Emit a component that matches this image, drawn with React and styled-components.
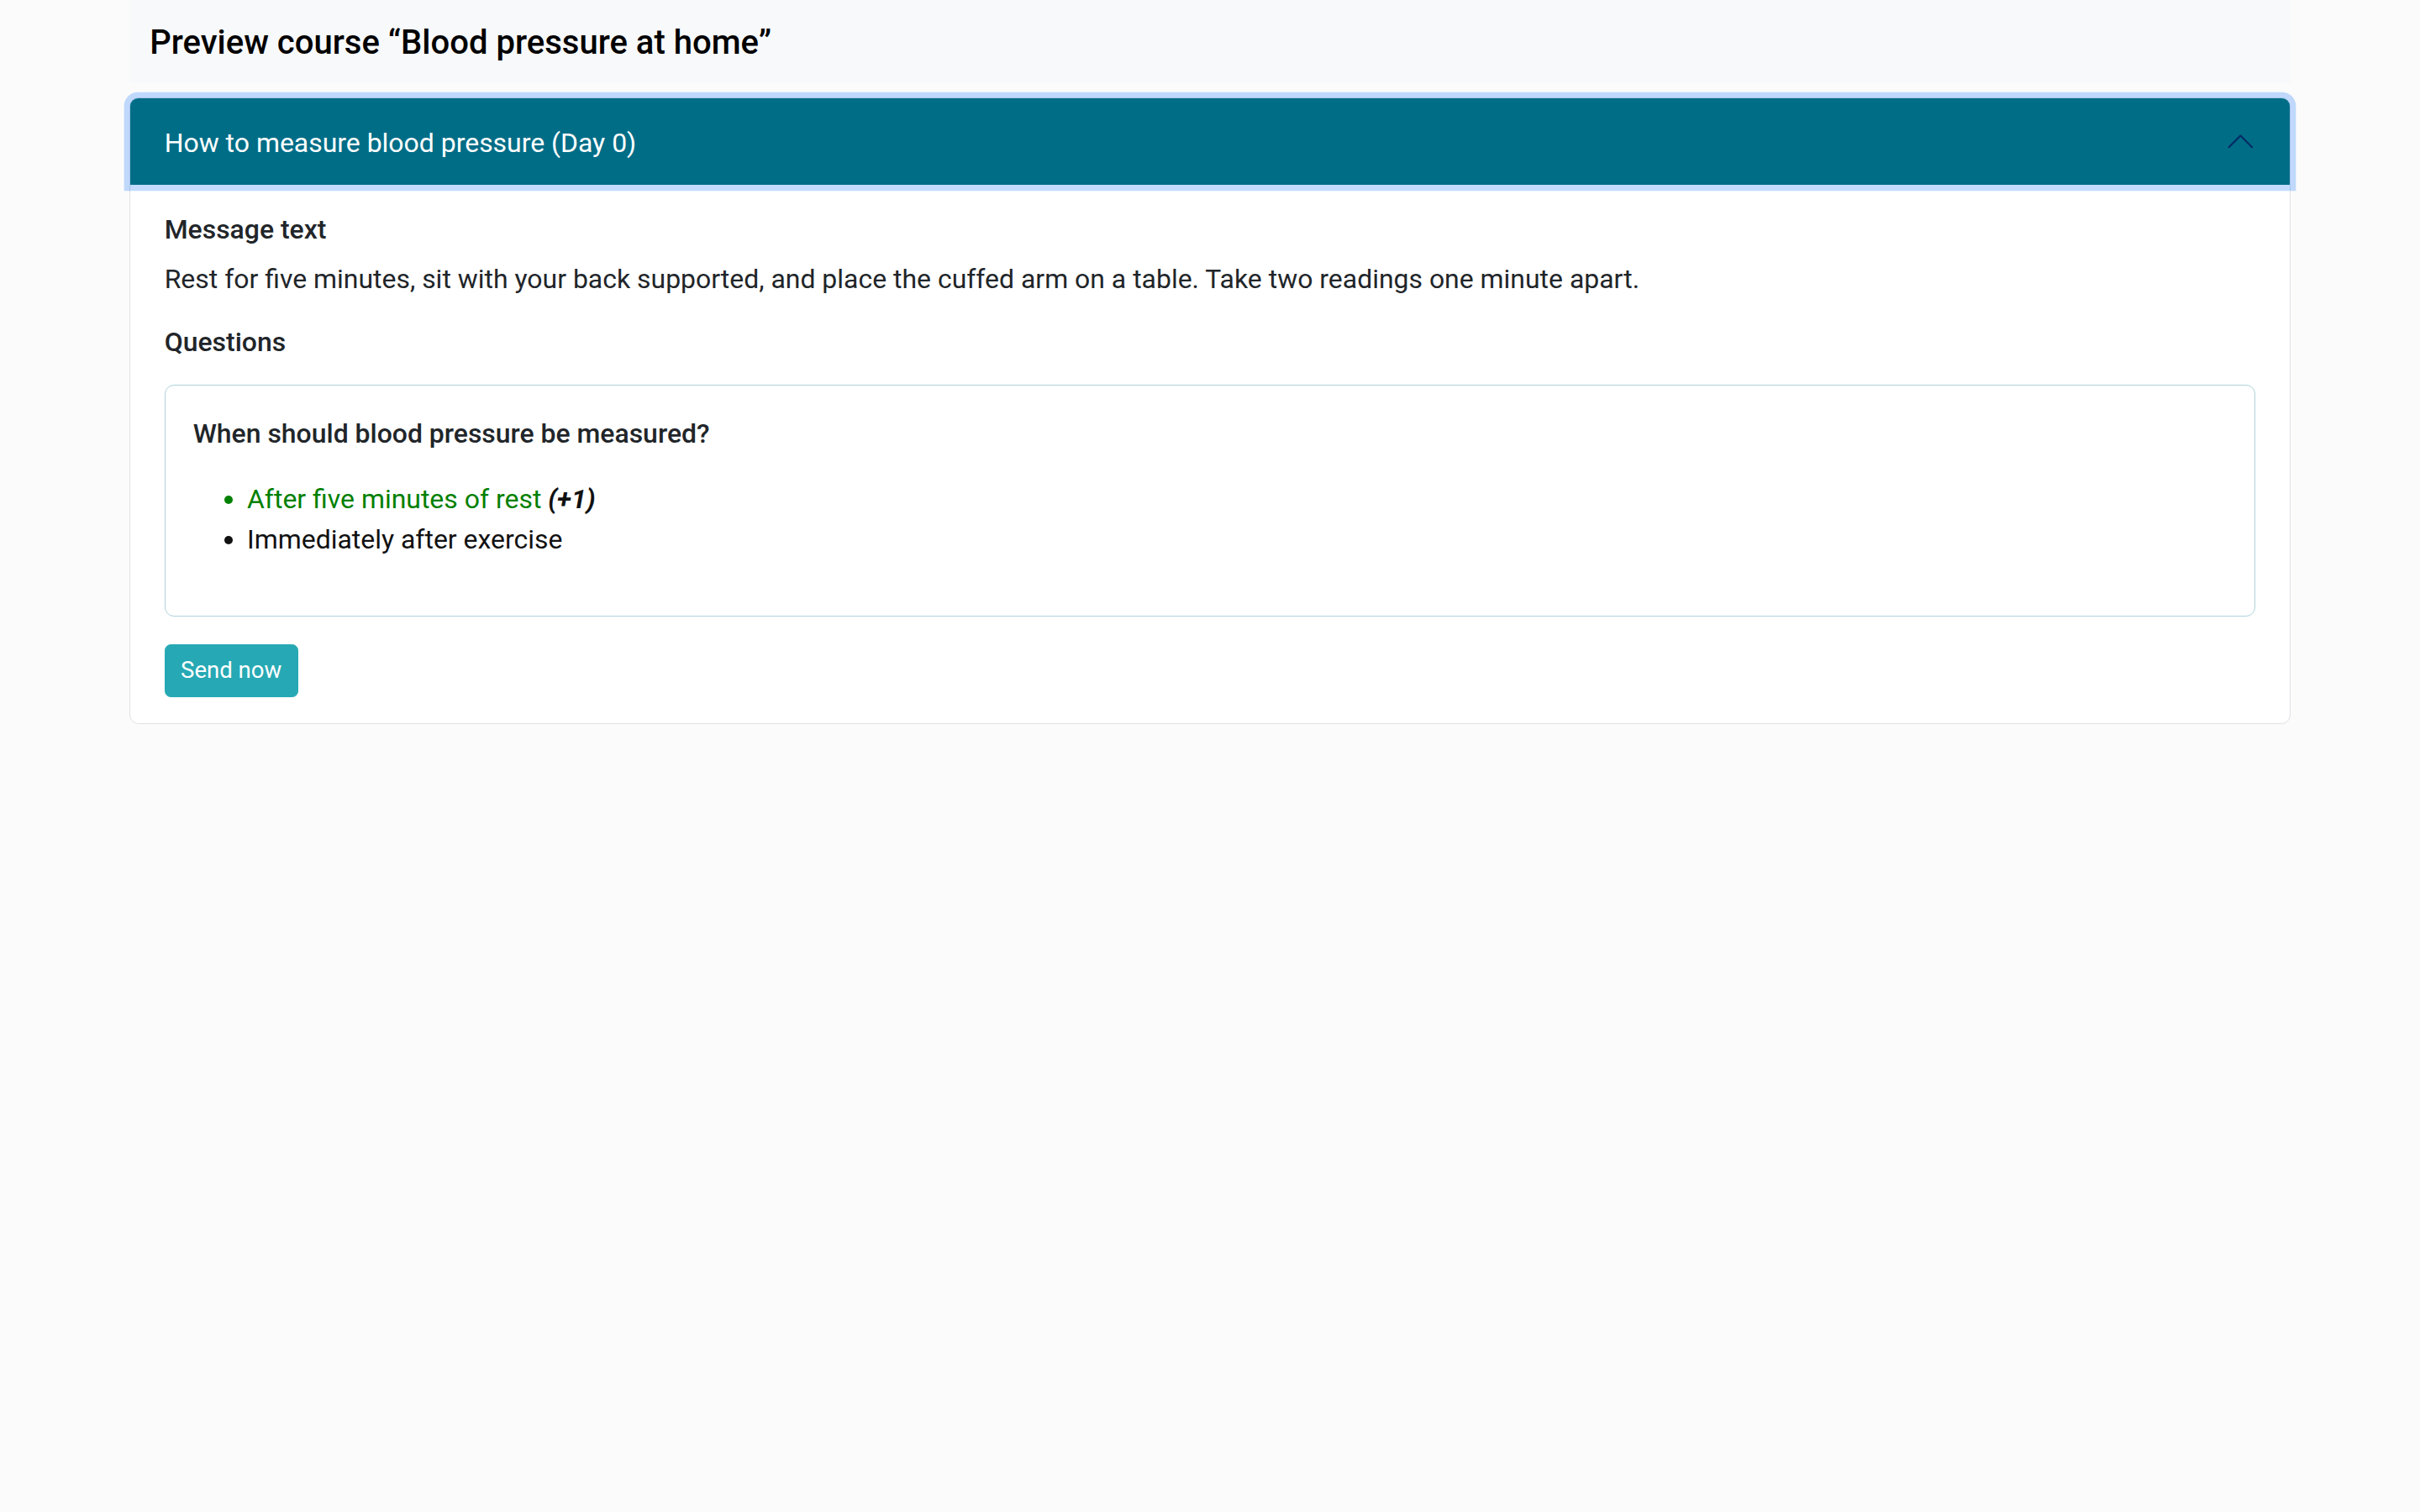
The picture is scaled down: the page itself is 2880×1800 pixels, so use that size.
import React from "react";
import styled, { createGlobalStyle } from "styled-components";

const Global = createGlobalStyle`
  html, body {
    margin: 0;
    padding: 0;
    background: #fbfbfb;
  }
  body {
    font-family: Roboto, "Noto Sans", "Liberation Sans", sans-serif;
    color: #212529;
  }
  * { box-sizing: border-box; }
`;

/* The layout is authored at 1568 css px wide and scaled up to the window. */
const Page = styled.div`
  zoom: 1.8367;
  width: 1568px;
  min-height: 980px;
  background: #fbfbfb;
  font-family: Roboto, "Noto Sans", "Liberation Sans", sans-serif;
  font-size: 17.4px;
  line-height: 24px;
`;

const Container = styled.div`
  width: 1400px;
  margin: 0 auto;
`;

const TitleBar = styled.div`
  background: #f8f9fa;
  padding: 16px 13px 14px;
`;

const Title = styled.h5`
  margin: 0;
  font-size: 21.8px;
  font-weight: 500;
  line-height: 24px;
  color: #000;
`;

const Card = styled.div`
  margin-top: 9px;
  background: #fff;
  border: 1px solid #dee2e6;
  border-radius: 6px;
`;

const HeaderButton = styled.button`
  position: relative;
  z-index: 3;
  display: flex;
  align-items: center;
  width: 100%;
  padding: 17px 22px 15px 22px;
  border: 0;
  border-radius: 5px 5px 0 0;
  background: #006d87;
  color: #fff;
  font-family: inherit;
  font-size: 17.4px;
  line-height: 24px;
  text-align: left;
  box-shadow: 0 0 0 4px rgba(13, 110, 253, 0.25);
  cursor: pointer;
`;

const HeaderLabel = styled.span`
  flex: 1;
`;

const Chevron = styled.svg`
  width: 20px;
  height: 20px;
  flex-shrink: 0;
  margin-top: -2px;
`;

const Body = styled.div`
  padding: 17px 22px 17px;
`;

const Label = styled.h6`
  margin: 0 0 8px;
  font-size: 17.4px;
  font-weight: 500;
  line-height: 24px;
  color: #212529;
`;

const Paragraph = styled.p`
  margin: 0 0 17px;
  font-size: 17.4px;
  line-height: 24px;
  color: #212529;
`;

const QuestionBox = styled.div`
  margin-top: 16px;
  padding: 19px 18px 18px;
  border: 1px solid #aed3dc;
  border-radius: 6px;
`;

const QuestionTitle = styled.div`
  font-size: 17.4px;
  font-weight: 500;
  line-height: 24px;
  color: #212529;
  margin-bottom: 18px;
`;

const Answers = styled.ul`
  margin: 0 0 18px;
  padding-left: 35px;
`;

const Answer = styled.li`
  font-size: 17.4px;
  line-height: 26px;
  color: ${(p) => (p.$correct ? "#008000" : "#111")};
`;

const Score = styled.em`
  font-weight: 700;
  color: #111;
`;

const SendButton = styled.button`
  margin-top: 18px;
  padding: 5px 10px;
  border: 1px solid #26a9b4;
  border-radius: 4px;
  background: #26a9b4;
  color: #fff;
  font-family: inherit;
  font-size: 15px;
  line-height: 23px;
  cursor: pointer;
`;

const answers = [
  { text: "After five minutes of rest", score: 1 },
  { text: "Immediately after exercise" },
];

export default function App() {
  return (
    <>
      <Global />
      <Page>
        <Container>
          <TitleBar>
            <Title>Preview course “Blood pressure at home”</Title>
          </TitleBar>
          <Card>
            <HeaderButton type="button" aria-expanded="true">
              <HeaderLabel>How to measure blood pressure (Day 0)</HeaderLabel>
              <Chevron viewBox="0 0 16 16" fill="none" stroke="#052c65" strokeLinecap="round" strokeLinejoin="round">
                <path d="M2 11L8 5L14 11" />
              </Chevron>
            </HeaderButton>
            <Body>
              <Label>Message text</Label>
              <Paragraph>
                Rest for five minutes, sit with your back supported, and place the cuffed arm on a table. Take two readings one minute apart.
              </Paragraph>
              <Label>Questions</Label>
              <QuestionBox>
                <QuestionTitle>When should blood pressure be measured?</QuestionTitle>
                <Answers>
                  {answers.map((a) => (
                    <Answer key={a.text} $correct={a.score > 0}>
                      {a.text}
                      {a.score > 0 && (
                        <>
                          {" "}
                          <Score>(+{a.score})</Score>
                        </>
                      )}
                    </Answer>
                  ))}
                </Answers>
              </QuestionBox>
              <SendButton type="button">Send now</SendButton>
            </Body>
          </Card>
        </Container>
      </Page>
    </>
  );
}
